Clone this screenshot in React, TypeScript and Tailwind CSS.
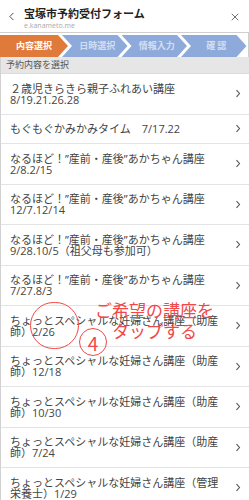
import React from "react";
import { ChevronLeft, X } from "lucide-react";

const items: string[][] = [
  ["２歳児きらきら親子ふれあい講座", "8/19.21.26.28"],
  ["もぐもぐかみかみタイム　7/17.22"],
  ["なるほど！”産前・産後”あかちゃん講座", "2/8.2/15"],
  ["なるほど！”産前・産後”あかちゃん講座", "12/7.12/14"],
  ["なるほど！”産前・産後”あかちゃん講座", "9/28.10/5（祖父母も参加可）"],
  ["なるほど！”産前・産後”あかちゃん講座", "7/27.8/3"],
  ["ちょっとスペシャルな妊婦さん講座（助産", "師）2/26"],
  ["ちょっとスペシャルな妊婦さん講座（助産", "師）12/18"],
  ["ちょっとスペシャルな妊婦さん講座（助産", "師）10/30"],
  ["ちょっとスペシャルな妊婦さん講座（助産", "師）7/24"],
  ["ちょっとスペシャルな妊婦さん講座（管理", "栄養士）1/29"],
];

function Chevron() {
  return (
    <svg width="6" height="9" viewBox="0 0 6 9" className="shrink-0">
      <polyline points="1.5,1.2 4.5,4.5 1.5,7.8" fill="none" stroke="#555" strokeWidth="1.1" />
    </svg>
  );
}

export default function App() {
  return (
    <div
      className="relative w-[249px] h-[500px] overflow-hidden bg-white"
      style={{ fontFamily: '"Open Sans", "Noto Sans CJK JP", sans-serif' }}
    >
      {/* header */}
      <div className="flex h-[32px] items-start">
        <div className="w-[24px] h-[32px] flex items-center justify-end pr-[6px] pt-[1px]">
          <ChevronLeft size={13} strokeWidth={1.6} color="#333" />
        </div>
        <div className="flex-1 pt-[6px]">
          <div
            className="text-[11px] leading-[14px] font-bold text-[#222]"
            style={{ fontFamily: '"Noto Sans CJK JP", sans-serif' }}
          >
            宝塚市予約受付フォーム
          </div>
          <div className="text-[7px] leading-[9px] mt-[0.5px] text-[#a8a8a8]">e.kanameto.me</div>
        </div>
        <div className="h-[32px] flex items-center pr-[8px] pt-[1px]">
          <X size={12} strokeWidth={1.4} color="#333" />
        </div>
      </div>

      {/* step bar */}
      <div className="border-t border-[#cfcfcf] pt-[2px] border-r">
        <div
          className="flex h-[22px] text-[9px] font-bold"
          style={{ fontFamily: '"Noto Sans CJK JP", sans-serif' }}
        >
          <div className="w-[68px] bg-[#e07a3a] text-white flex items-center justify-center [clip-path:polygon(0_0,58px_0,68px_50%,58px_100%,0_100%)]">
            内容選択
          </div>
          <div className="ml-[-6px] w-[65.5px] pl-[5px] bg-[#8eaadb] text-[#d3def3] flex items-center justify-center [clip-path:polygon(0_0,55.5px_0,65.5px_50%,55.5px_100%,0_100%,10px_50%)]">
            日時選択
          </div>
          <div className="ml-[-6px] w-[65.5px] pl-[5px] bg-[#8eaadb] text-[#d3def3] flex items-center justify-center [clip-path:polygon(0_0,55.5px_0,65.5px_50%,55.5px_100%,0_100%,10px_50%)]">
            情報入力
          </div>
          <div className="ml-[-6px] w-[65.5px] pl-[5px] bg-[#8eaadb] text-[#d3def3] flex items-center justify-center [clip-path:polygon(0_0,55.5px_0,65.5px_50%,55.5px_100%,0_100%,10px_50%)]">
            確 認
          </div>
        </div>
      </div>

      {/* section header + list */}
      <div className="border-l border-[#d2d2d2]">
        <div
          className="h-[17px] bg-[#e6e6e6] border-b border-[#dcdcdc] flex items-center pl-[5px] text-[9px] text-[#555]"
          style={{ fontFamily: '"Noto Sans CJK JP", sans-serif' }}
        >
          予約内容を選択
        </div>
        {items.map((lines, i) => (
          <div
            key={i}
            className="flex items-center border-b border-[#e4e4e4] pl-[9px] pr-[8px] py-[8.75px]"
          >
            <div className="flex-1 text-[11px] leading-[11px] text-[#444] whitespace-nowrap">
              {lines.map((l, j) => (
                <div key={j}>{l}</div>
              ))}
            </div>
            <Chevron />
          </div>
        ))}
      </div>

      {/* annotation overlay */}
      <div className="absolute left-[30px] top-[302px] w-[49px] h-[47px] rounded-full border-[1.5px] border-[#f04848]" />
      <div
        className="absolute left-[79px] top-[328px] w-[28px] h-[28px] rounded-full border-[1.5px] border-[#f04848] flex items-center justify-center text-[19px] leading-none text-[#f04848]"
        style={{ fontFamily: '"Noto Sans CJK JP", sans-serif' }}
      >
        4
      </div>
      <div
        className="absolute left-[95px] top-[299px] text-[17px] leading-[21px] text-[#f04848] whitespace-nowrap"
        style={{ fontFamily: '"Noto Sans CJK JP", sans-serif' }}
      >
        <div>ご希望の講座を</div>
        <div className="pl-[17px]">タップする</div>
      </div>
    </div>
  );
}
